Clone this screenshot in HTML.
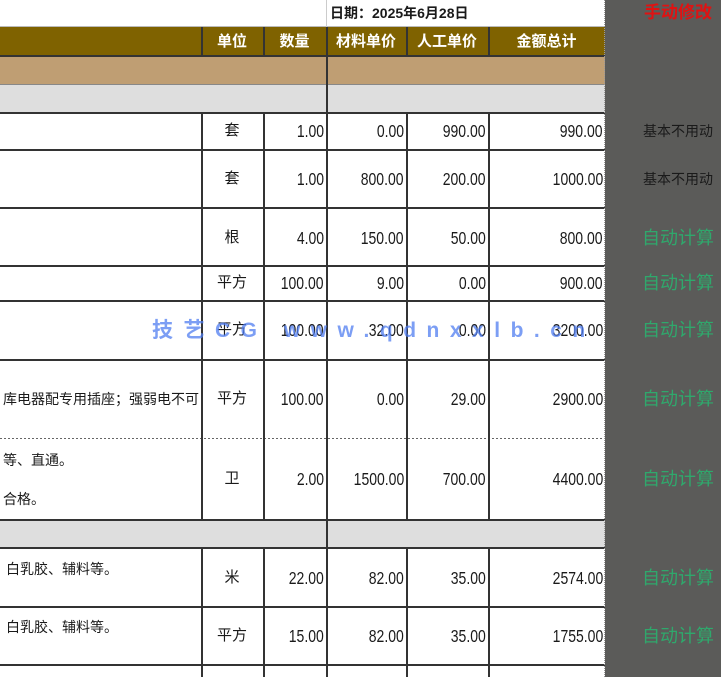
<!DOCTYPE html>
<html><head><meta charset="utf-8"><style>
body{margin:0;width:721px;height:677px;overflow:hidden;background:#fff;position:relative;font-family:"Liberation Sans","Noto Sans CJK SC",sans-serif;}
div{position:absolute;box-sizing:border-box}
.h{left:0;width:605px;height:2px;background:#333}
.v{width:1.5px;background:#333}
.t{height:20px;line-height:20px;font-size:15px;color:#1a1a1a;white-space:nowrap}
.n{text-align:right;font-size:17.5px}
.n span{display:inline-block;transform:scaleX(.8);transform-origin:100% 50%}
.c{text-align:center}
.d{font-size:14px;width:198px;overflow:hidden}
.p{left:620px;width:116px;text-align:center;font-size:18px;color:#2fa86c}
</style></head><body>
<div style="left:0;top:27px;width:605px;height:29px;background:#7f6200"></div>
<div style="left:0;top:56px;width:605px;height:29px;background:#bf9e73"></div>
<div style="left:0;top:85px;width:605px;height:28px;background:#dedede"></div>
<div style="left:0;top:520px;width:605px;height:28px;background:#dedede"></div>
<div style="left:605px;top:0;width:116px;height:677px;background:#5b5b59"></div>
<div class="h" style="top:26px;background:#bbb;height:1px"></div>
<div class="h" style="top:55px"></div>
<div class="h" style="top:84px;background:#888;height:1px"></div>
<div class="h" style="top:112px"></div>
<div class="h" style="top:149px"></div>
<div class="h" style="top:207px"></div>
<div class="h" style="top:265px"></div>
<div class="h" style="top:300px"></div>
<div class="h" style="top:359px"></div>
<div class="h" style="top:438px;height:1px;background:repeating-linear-gradient(90deg,#666 0 2px,transparent 2px 4px)"></div>
<div class="h" style="top:519px"></div>
<div class="h" style="top:547px"></div>
<div class="h" style="top:606px"></div>
<div class="h" style="top:664px"></div>
<div class="v" style="left:326px;top:0;height:27px;background:#ccc;width:1px"></div>
<div class="v" style="left:326px;top:56px;height:57px"></div>
<div class="v" style="left:326px;top:520px;height:28px"></div>
<div class="v" style="left:201px;top:27px;height:29px"></div>
<div class="v" style="left:263px;top:27px;height:29px"></div>
<div class="v" style="left:326px;top:27px;height:29px"></div>
<div class="v" style="left:406px;top:27px;height:29px"></div>
<div class="v" style="left:488px;top:27px;height:29px"></div>
<div class="v" style="left:201px;top:113px;height:407px"></div>
<div class="v" style="left:263px;top:113px;height:407px"></div>
<div class="v" style="left:326px;top:113px;height:407px"></div>
<div class="v" style="left:406px;top:113px;height:407px"></div>
<div class="v" style="left:488px;top:113px;height:407px"></div>
<div class="v" style="left:201px;top:548px;height:129px"></div>
<div class="v" style="left:263px;top:548px;height:129px"></div>
<div class="v" style="left:326px;top:548px;height:129px"></div>
<div class="v" style="left:406px;top:548px;height:129px"></div>
<div class="v" style="left:488px;top:548px;height:129px"></div>
<div style="left:604px;top:0;width:1px;height:677px;border-left:1px dotted #999"></div>
<div class="t" style="left:330px;top:3px;font-weight:bold;font-size:14px">日期：2025年6月28日</div>
<div class="t p" style="top:3px;color:#e01212;font-weight:bold;font-size:17px">手动修改</div>
<div class="t c" style="left:201px;width:62px;top:32px;color:#fff;font-weight:bold">单位</div>
<div class="t c" style="left:263px;width:63px;top:32px;color:#fff;font-weight:bold">数量</div>
<div class="t c" style="left:326px;width:80px;top:32px;color:#fff;font-weight:bold">材料单价</div>
<div class="t c" style="left:406px;width:82px;top:32px;color:#fff;font-weight:bold">人工单价</div>
<div class="t c" style="left:488px;width:117px;top:32px;color:#fff;font-weight:bold">金额总计</div>

<div class="t c" style="left:201px;width:62px;top:121px">套</div>
<div class="t n" style="left:263px;width:61px;top:121px"><span>1.00</span></div>
<div class="t n" style="left:326px;width:78px;top:121px"><span>0.00</span></div>
<div class="t n" style="left:406px;width:80px;top:121px"><span>990.00</span></div>
<div class="t n" style="left:488px;width:115px;top:121px"><span>990.00</span></div>
<div class="t p" style="top:121px;color:#1a1a1a;font-size:14px">基本不用动</div>

<div class="t c" style="left:201px;width:62px;top:169px">套</div>
<div class="t n" style="left:263px;width:61px;top:169px"><span>1.00</span></div>
<div class="t n" style="left:326px;width:78px;top:169px"><span>800.00</span></div>
<div class="t n" style="left:406px;width:80px;top:169px"><span>200.00</span></div>
<div class="t n" style="left:488px;width:115px;top:169px"><span>1000.00</span></div>
<div class="t p" style="top:169px;color:#1a1a1a;font-size:14px">基本不用动</div>

<div class="t c" style="left:201px;width:62px;top:228px">根</div>
<div class="t n" style="left:263px;width:61px;top:228px"><span>4.00</span></div>
<div class="t n" style="left:326px;width:78px;top:228px"><span>150.00</span></div>
<div class="t n" style="left:406px;width:80px;top:228px"><span>50.00</span></div>
<div class="t n" style="left:488px;width:115px;top:228px"><span>800.00</span></div>
<div class="t p" style="top:228px">自动计算</div>

<div class="t c" style="left:201px;width:62px;top:273px">平方</div>
<div class="t n" style="left:263px;width:61px;top:273px"><span>100.00</span></div>
<div class="t n" style="left:326px;width:78px;top:273px"><span>9.00</span></div>
<div class="t n" style="left:406px;width:80px;top:273px"><span>0.00</span></div>
<div class="t n" style="left:488px;width:115px;top:273px"><span>900.00</span></div>
<div class="t p" style="top:273px">自动计算</div>

<div class="t c" style="left:201px;width:62px;top:320px">平方</div>
<div class="t n" style="left:263px;width:61px;top:320px"><span>100.00</span></div>
<div class="t n" style="left:326px;width:78px;top:320px"><span>32.00</span></div>
<div class="t n" style="left:406px;width:80px;top:320px"><span>0.00</span></div>
<div class="t n" style="left:488px;width:115px;top:320px"><span>3200.00</span></div>
<div class="t p" style="top:320px">自动计算</div>

<div class="t d" style="left:3px;top:389px">库电器配专用插座；强弱电不可</div>
<div class="t c" style="left:201px;width:62px;top:389px">平方</div>
<div class="t n" style="left:263px;width:61px;top:389px"><span>100.00</span></div>
<div class="t n" style="left:326px;width:78px;top:389px"><span>0.00</span></div>
<div class="t n" style="left:406px;width:80px;top:389px"><span>29.00</span></div>
<div class="t n" style="left:488px;width:115px;top:389px"><span>2900.00</span></div>
<div class="t p" style="top:389px">自动计算</div>

<div class="t d" style="left:3px;top:450px">等、直通。</div>
<div class="t d" style="left:3px;top:489px">合格。</div>
<div class="t c" style="left:201px;width:62px;top:469px">卫</div>
<div class="t n" style="left:263px;width:61px;top:469px"><span>2.00</span></div>
<div class="t n" style="left:326px;width:78px;top:469px"><span>1500.00</span></div>
<div class="t n" style="left:406px;width:80px;top:469px"><span>700.00</span></div>
<div class="t n" style="left:488px;width:115px;top:469px"><span>4400.00</span></div>
<div class="t p" style="top:469px">自动计算</div>

<div class="t d" style="left:6px;top:559px">白乳胶、辅料等。</div>
<div class="t c" style="left:201px;width:62px;top:568px">米</div>
<div class="t n" style="left:263px;width:61px;top:568px"><span>22.00</span></div>
<div class="t n" style="left:326px;width:78px;top:568px"><span>82.00</span></div>
<div class="t n" style="left:406px;width:80px;top:568px"><span>35.00</span></div>
<div class="t n" style="left:488px;width:115px;top:568px"><span>2574.00</span></div>
<div class="t p" style="top:568px">自动计算</div>

<div class="t d" style="left:6px;top:617px">白乳胶、辅料等。</div>
<div class="t c" style="left:201px;width:62px;top:626px">平方</div>
<div class="t n" style="left:263px;width:61px;top:626px"><span>15.00</span></div>
<div class="t n" style="left:326px;width:78px;top:626px"><span>82.00</span></div>
<div class="t n" style="left:406px;width:80px;top:626px"><span>35.00</span></div>
<div class="t n" style="left:488px;width:115px;top:626px"><span>1755.00</span></div>
<div class="t p" style="top:626px">自动计算</div>

<div style="left:152px;top:318px;height:26px;line-height:26px;font-size:21px;font-weight:bold;color:rgba(80,125,240,0.75);letter-spacing:10.5px;white-space:nowrap">技艺CG www.qdnxxlb.cn</div>
</body></html>
